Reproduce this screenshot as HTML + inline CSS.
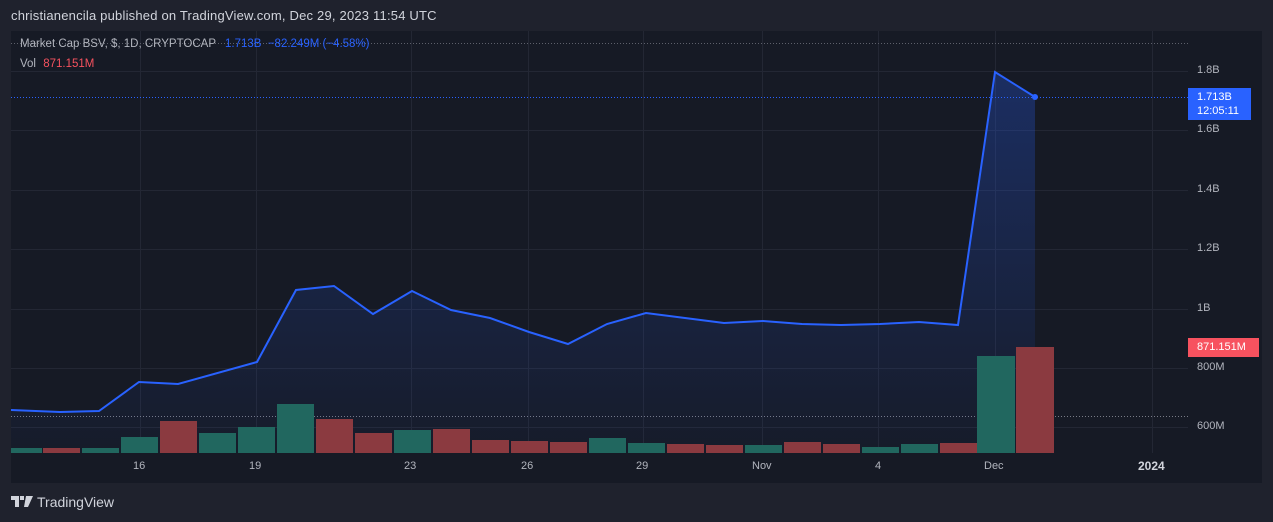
<!DOCTYPE html>
<html><head><meta charset="utf-8"><style>
body{margin:0;width:1273px;height:522px;background:#1f222d;font-family:"Liberation Sans",sans-serif;overflow:hidden;position:relative}
.t{position:absolute;white-space:nowrap}
</style></head><body>
<div class="t" style="left:11px;top:8px;font-size:13px;letter-spacing:0.2px;color:#d1d4dc">christianencila published on TradingView.com, Dec 29, 2023 11:54 UTC</div>
<div style="position:absolute;left:11px;top:31px;width:1251px;height:452px;background:#161a25"></div>
<svg style="position:absolute;left:0;top:0" width="1273" height="522">
<defs><linearGradient id="g" x1="0" y1="0" x2="0" y2="1"><stop offset="0" stop-color="#2962ff" stop-opacity="0.28"/><stop offset="1" stop-color="#2962ff" stop-opacity="0.02"/></linearGradient></defs>
<g stroke="#232734" stroke-width="1">
<line x1="11" x2="1188" y1="71.5" y2="71.5"/><line x1="11" x2="1188" y1="130.5" y2="130.5"/><line x1="11" x2="1188" y1="190.5" y2="190.5"/><line x1="11" x2="1188" y1="249.5" y2="249.5"/><line x1="11" x2="1188" y1="309.5" y2="309.5"/><line x1="11" x2="1188" y1="368.5" y2="368.5"/><line x1="11" x2="1188" y1="427.5" y2="427.5"/>
<line x1="140.5" x2="140.5" y1="31" y2="453"/><line x1="256.5" x2="256.5" y1="31" y2="453"/><line x1="411.5" x2="411.5" y1="31" y2="453"/><line x1="528.5" x2="528.5" y1="31" y2="453"/><line x1="643.5" x2="643.5" y1="31" y2="453"/><line x1="762.5" x2="762.5" y1="31" y2="453"/><line x1="878.5" x2="878.5" y1="31" y2="453"/><line x1="995.5" x2="995.5" y1="31" y2="453"/><line x1="1152.5" x2="1152.5" y1="31" y2="453"/>
</g>
<line x1="11" x2="1188" y1="43.5" y2="43.5" stroke="#5d606b" stroke-dasharray="1 2"/>
<line x1="11" x2="1188" y1="416.5" y2="416.5" stroke="#787b86" stroke-dasharray="1 2"/>
<line x1="11" x2="1188" y1="97.5" y2="97.5" stroke="#2962ff" stroke-dasharray="1 2"/>
<path d="M11,410 L60,412 L99,411 L139,382 L178,384 L257,362 L296,290 L334,286 L373,314 L412,291 L451,310 L490,318 L529,332 L568,344 L607,324 L646,313 L685,318 L724,323 L763,321 L802,324 L841,325 L880,324 L919,322 L958,325 L995,72 L1035,97 L1035,453 L11,453Z" fill="url(#g)"/>
<g>
<rect x="11" y="448" width="31" height="5" fill="#21675f"/><rect x="43" y="448" width="37" height="5" fill="#8b3a40"/><rect x="82" y="448" width="37" height="5" fill="#21675f"/><rect x="121" y="437" width="37" height="16" fill="#21675f"/><rect x="160" y="421" width="37" height="32" fill="#8b3a40"/><rect x="199" y="433" width="37" height="20" fill="#21675f"/><rect x="238" y="427" width="37" height="26" fill="#21675f"/><rect x="277" y="404" width="37" height="49" fill="#21675f"/><rect x="316" y="419" width="37" height="34" fill="#8b3a40"/><rect x="355" y="433" width="37" height="20" fill="#8b3a40"/><rect x="394" y="430" width="37" height="23" fill="#21675f"/><rect x="433" y="429" width="37" height="24" fill="#8b3a40"/><rect x="472" y="440" width="37" height="13" fill="#8b3a40"/><rect x="511" y="441" width="37" height="12" fill="#8b3a40"/><rect x="550" y="442" width="37" height="11" fill="#8b3a40"/><rect x="589" y="438" width="37" height="15" fill="#21675f"/><rect x="628" y="443" width="37" height="10" fill="#21675f"/><rect x="667" y="444" width="37" height="9" fill="#8b3a40"/><rect x="706" y="445" width="37" height="8" fill="#8b3a40"/><rect x="745" y="445" width="37" height="8" fill="#21675f"/><rect x="784" y="442" width="37" height="11" fill="#8b3a40"/><rect x="823" y="444" width="37" height="9" fill="#8b3a40"/><rect x="862" y="447" width="37" height="6" fill="#21675f"/><rect x="901" y="444" width="37" height="9" fill="#21675f"/><rect x="940" y="443" width="37" height="10" fill="#8b3a40"/><rect x="977" y="356" width="38" height="97" fill="#21675f"/><rect x="1016" y="347" width="38" height="106" fill="#8b3a40"/>
</g>
<path d="M11,410 L60,412 L99,411 L139,382 L178,384 L257,362 L296,290 L334,286 L373,314 L412,291 L451,310 L490,318 L529,332 L568,344 L607,324 L646,313 L685,318 L724,323 L763,321 L802,324 L841,325 L880,324 L919,322 L958,325 L995,72 L1035,97" fill="none" stroke="#2962ff" stroke-width="2"/>
<circle cx="1035" cy="97" r="3" fill="#2962ff"/>
<rect x="1188" y="88" width="63" height="32" fill="#2962ff"/>
<rect x="1188" y="338" width="71" height="19" fill="#f7525f"/>
<path d="M11,496h8v11h-4v-7h-4z M20,496h4v4h-4z M26,496h7l-5,11h-4z" fill="#d1d4dc"/>
</svg>
<div class="t" style="left:20px;top:38px;font-size:11.5px;color:#b2b5be">Market Cap BSV, $, 1D, CRYPTOCAP <span style="color:#2962ff;margin-left:6px">1.713B &nbsp;−82.249M (−4.58%)</span></div>
<div class="t" style="left:20px;top:58px;font-size:11.5px;color:#b2b5be">Vol <span style="color:#f7525f;margin-left:4px">871.151M</span></div>
<div style="font-size:11px;color:#b2b5be">
<div class="t" style="left:1197px;top:64px">1.8B</div>
<div class="t" style="left:1197px;top:123px">1.6B</div>
<div class="t" style="left:1197px;top:183px">1.4B</div>
<div class="t" style="left:1197px;top:242px">1.2B</div>
<div class="t" style="left:1197px;top:302px">1B</div>
<div class="t" style="left:1197px;top:361px">800M</div>
<div class="t" style="left:1197px;top:420px">600M</div>
<div class="t" style="left:1197px;top:90px;color:#fff;line-height:14px">1.713B<br>12:05:11</div>
<div class="t" style="left:1197px;top:341px;color:#fff">871.151M</div>
<div class="t" style="left:133px;top:460px">16</div>
<div class="t" style="left:249px;top:460px">19</div>
<div class="t" style="left:404px;top:460px">23</div>
<div class="t" style="left:521px;top:460px">26</div>
<div class="t" style="left:636px;top:460px">29</div>
<div class="t" style="left:752px;top:460px">Nov</div>
<div class="t" style="left:875px;top:460px">4</div>
<div class="t" style="left:984px;top:460px">Dec</div>
<div class="t" style="left:1138px;top:459px;font-weight:bold;font-size:12px;color:#d1d4dc">2024</div>
</div>
<div class="t" style="left:37px;top:494px;font-size:14px;color:#d1d4dc">TradingView</div>
</body></html>
